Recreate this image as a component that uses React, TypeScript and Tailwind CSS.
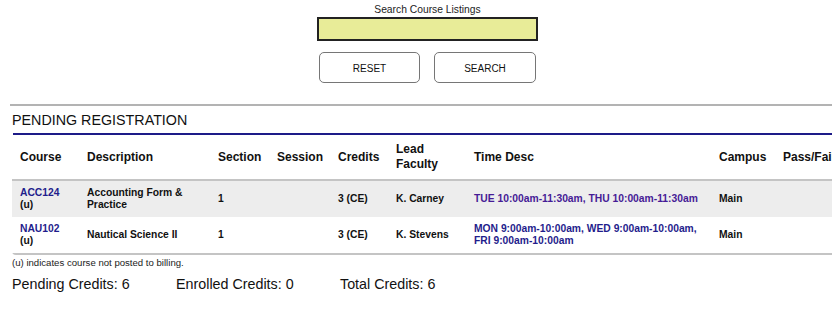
const columns = ['Course', 'Description', 'Section', 'Session', 'Credits', 'Lead Faculty', 'Time Desc', 'Campus', 'Pass/Fail']

const rows = [
  {
    course: 'ACC124',
    desc: 'Accounting Form & Practice',
    section: '1',
    session: '',
    credits: '3 (CE)',
    faculty: 'K. Carney',
    time: 'TUE 10:00am-11:30am, THU 10:00am-11:30am',
    timeColor: 'text-[#461b96]',
    campus: 'Main',
    shaded: true,
  },
  {
    course: 'NAU102',
    desc: 'Nautical Science II',
    section: '1',
    session: '',
    credits: '3 (CE)',
    faculty: 'K. Stevens',
    time: 'MON 9:00am-10:00am, WED 9:00am-10:00am, FRI 9:00am-10:00am',
    timeColor: 'text-[#1f1d8c]',
    campus: 'Main',
    shaded: false,
  },
]

const grid = 'grid grid-cols-[67px_131px_59px_61px_58px_78px_245px_64px_80px] items-center'
const cell = 'pl-[8px] pr-[8px]'

export default function App() {
  return (
    <div className="h-[310px] w-[832px] overflow-hidden bg-white font-['Liberation_Sans',Arial,sans-serif] text-[#111]">
      <div className="w-[855px]">
        {/* Search */}
        <div className="flex flex-col items-center pt-[3px]">
          <label className="text-[10.3px] leading-[13px] text-[#222]">Search Course Listings</label>
          <input
            type="text"
            className="mt-[1px] h-[24px] w-[221px] border-2 border-[#222] bg-[#e8ec98] outline-none"
          />
          <div className="mt-[11px] flex gap-[14px]">
            <button className="h-[31px] w-[101px] rounded-[5px] border border-[#767676] bg-white pt-[1px] text-[10px] text-[#111]">
              RESET
            </button>
            <button className="h-[31px] w-[102px] rounded-[5px] border border-[#767676] bg-white pt-[1px] text-[10px] text-[#111]">
              SEARCH
            </button>
          </div>
        </div>

        <div className="ml-[10px] mt-[21px] h-[2px] bg-[#b3b3b3]" />

        {/* Pending registration */}
        <div className="ml-[12px]">
          <h2 className="mt-[6px] text-[14.3px] leading-[16px] text-[#111]">PENDING REGISTRATION</h2>
          <div className="ml-[1px] mt-[5px] h-[2px] bg-[#1d1b88]" />

          <div className="rounded-b-[4px] border-b-2 border-[#c4c4c4]">
            <div className={`${grid} h-[46px] border-b-2 border-[#c4c4c4] text-[12px] font-bold leading-[15px]`}>
              {columns.map((c) => (
                <div key={c} className={c === 'Pass/Fail' ? 'pl-[8px] whitespace-nowrap' : cell}>
                  {c}
                </div>
              ))}
            </div>
            {rows.map((r) => (
              <div
                key={r.course}
                className={`${grid} h-[36px] text-[10.3px] font-bold leading-[12px] ${r.shaded ? 'bg-[#ededed]' : 'bg-white'}`}
              >
                <div className={cell}>
                  <a className="block text-[#1f1d8c]">{r.course}</a>
                  <span>(u)</span>
                </div>
                <div className={cell}>{r.desc}</div>
                <div className={cell}>{r.section}</div>
                <div className={cell}>{r.session}</div>
                <div className={cell}>{r.credits}</div>
                <div className={cell}>{r.faculty}</div>
                <div className={`${cell} ${r.timeColor}`}>{r.time}</div>
                <div className={cell}>{r.campus}</div>
                <div className={cell} />
              </div>
            ))}
          </div>

          <p className="mt-[2px] text-[9.6px] leading-[12px] text-[#222]">
            (u) indicates course not posted to billing.
          </p>

          <div className="mt-[7px] flex text-[14.3px] leading-[17px] text-[#111]">
            <span className="w-[164px]">Pending Credits: 6</span>
            <span className="w-[164px]">Enrolled Credits: 0</span>
            <span className="w-[164px]">Total Credits: 6</span>
          </div>
        </div>
      </div>
    </div>
  )
}
